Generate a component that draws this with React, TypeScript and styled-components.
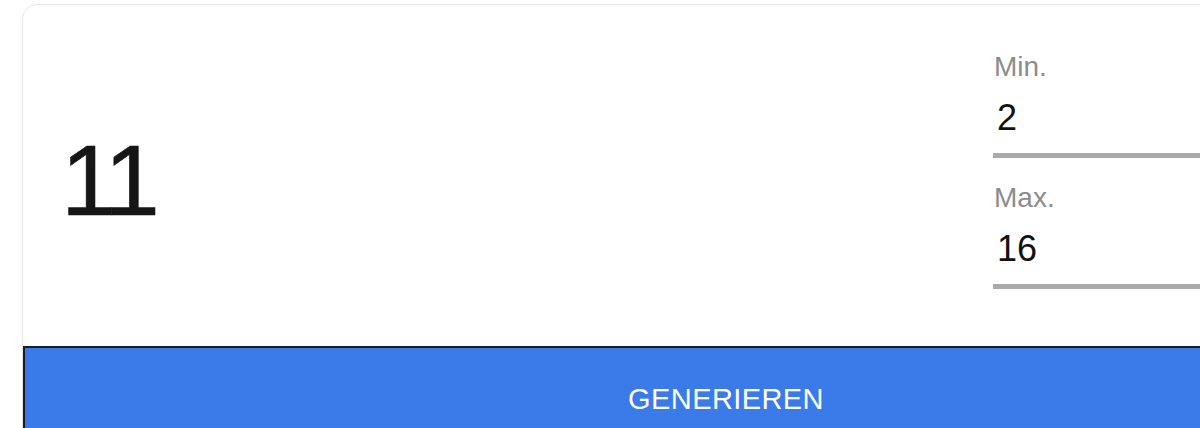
import styled, { createGlobalStyle } from "styled-components";

const GlobalStyle = createGlobalStyle`
  html, body {
    margin: 0;
    padding: 0;
    overflow: hidden;
    background: #fff;
    font-family: "Liberation Sans", Arial, sans-serif;
  }
`;

const Page = styled.div`
  padding: 4px 0 0 22px;
  width: 1200px;
  height: 428px;
  box-sizing: border-box;
`;

const Card = styled.div`
  display: flex;
  flex-direction: column;
  width: 1406px;
  box-sizing: border-box;
  border: 1px solid #e6e6e6;
  border-radius: 15px;
  background: #fff;
  overflow: hidden;
`;

const CardBody = styled.div`
  display: flex;
  justify-content: space-between;
  align-items: flex-start;
  height: 341px;
  box-sizing: border-box;
  padding: 47px 34px 0 38px;
`;

const Result = styled.div`
  margin-top: 78px;
  font-size: 100px;
  line-height: 100px;
  letter-spacing: -5px;
  color: #161616;
  -webkit-text-stroke: 0.6px #161616;
`;

const Fields = styled.div`
  display: flex;
  flex-direction: column;
  gap: 25px;
  width: 400px;
`;

const Field = styled.label`
  display: flex;
  flex-direction: column;
`;

const FieldLabel = styled.span`
  font-size: 28px;
  line-height: 30px;
  color: #8c8c8c;
  padding-left: 1px;
`;

const FieldInput = styled.input`
  box-sizing: content-box;
  height: 44px;
  padding: 14px 4px 13px;
  border: none;
  border-bottom: 5px solid #aaaaaa;
  background: transparent;
  outline: none;
  font-family: "Liberation Sans", Arial, sans-serif;
  font-size: 36px;
  color: #111;
`;

const GenerateButton = styled.button`
  height: 104px;
  border: none;
  border-top: 2px solid #1c1c1c;
  border-left: 2px solid #1c1c1c;
  background: #3b7be9;
  color: #fff;
  font-family: "Liberation Sans", Arial, sans-serif;
  font-size: 29px;
  letter-spacing: 0.4px;
  text-transform: uppercase;
  cursor: pointer;
`;

const App = () => {
  return (
    <Page>
      <GlobalStyle />
      <Card>
        <CardBody>
          <Result>11</Result>
          <Fields>
            <Field>
              <FieldLabel>Min.</FieldLabel>
              <FieldInput type="text" defaultValue="2" />
            </Field>
            <Field>
              <FieldLabel>Max.</FieldLabel>
              <FieldInput type="text" defaultValue="16" />
            </Field>
          </Fields>
        </CardBody>
        <GenerateButton>Generieren</GenerateButton>
      </Card>
    </Page>
  );
};

export default App;
